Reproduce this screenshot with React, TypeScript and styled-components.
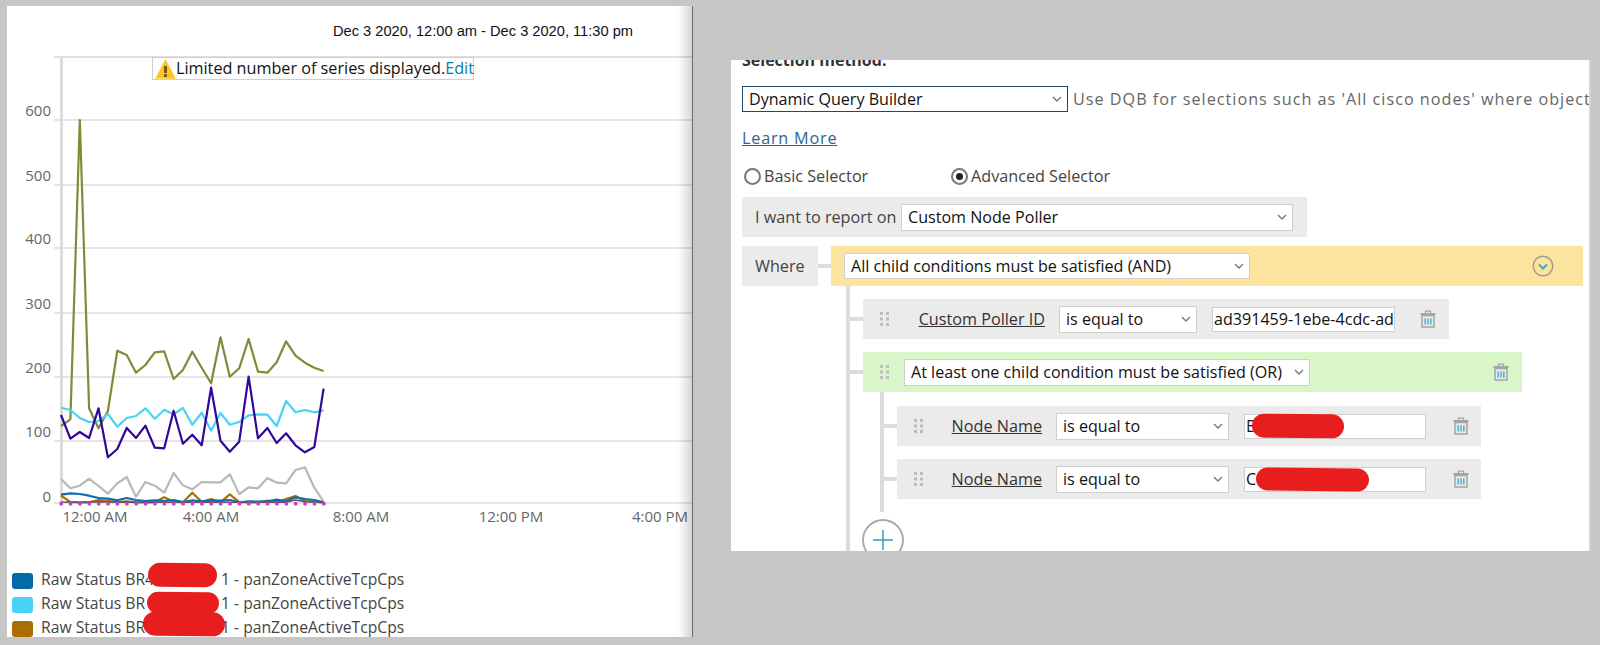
import React from "react";
import styled, { createGlobalStyle } from "styled-components";

const Global = createGlobalStyle`
  html, body { margin: 0; padding: 0; background: #c6c6c6; width: 1600px; height: 645px; overflow: hidden; }
  * { box-sizing: border-box; }
`;

const UI_FONT = `"Open Sans", "Noto Sans", sans-serif`;

const Page = styled.div`
  display: flex;
  align-items: flex-start;
  width: 1600px;
  height: 645px;
  overflow: hidden;
  background: #c6c6c6;
  font-family: ${UI_FONT};
`;

const ChartPanel = styled.section`
  position: relative;
  flex: none;
  width: 686px;
  height: 631px;
  margin: 6px 0 0 7px;
  background: #fff;
  overflow: hidden;
  border-right: 1px solid #6d6d6d;
  &::after {
    content: "";
    position: absolute;
    top: 0;
    right: 0;
    bottom: 0;
    width: 14px;
    background: linear-gradient(to right, rgba(0, 0, 0, 0), rgba(0, 0, 0, 0.16));
  }
`;

const DateRange = styled.header`
  height: 44px;
  padding: 16px 59px 0 0;
  text-align: right;
  font-family: "Liberation Sans", Arial, sans-serif;
  font-size: 14.65px;
  line-height: 18px;
  color: #111;
`;

const ChartArea = styled.div`
  position: relative;
  height: 519px;
`;

const ChartSvg = styled.svg`
  display: block;
  width: 685px;
  height: 519px;
`;

const AxisText = styled.text`
  font-family: ${UI_FONT};
  font-size: 15px;
  fill: #666;
`;

const WarningBadge = styled.div`
  position: absolute;
  left: 145px;
  top: 7px;
  width: 322px;
  height: 23px;
  display: flex;
  align-items: center;
  padding-left: 2px;
  background: #fff;
  border: 1px solid #cfcfcf;
  font-size: 16.2px;
  line-height: 20px;
  color: #111;
  white-space: nowrap;
`;

const BadgeText = styled.span`
  margin-top: -2px;
`;

const EditLink = styled.span`
  color: #0b7bab;
`;

const Legend = styled.div`
  display: flex;
  flex-direction: column;
  padding-left: 5px;
`;

const LegendRow = styled.div`
  position: relative;
  display: flex;
  align-items: center;
  height: 24px;
  font-size: 15.7px;
  color: #444;
  white-space: nowrap;
`;

const Swatch = styled.span<{ $color: string }>`
  flex: none;
  width: 21px;
  height: 16px;
  margin-right: 8px;
  border-radius: 3px;
  background: ${(p) => p.$color};
`;

const LegendName = styled.span`
  flex: none;
  width: 180px;
  margin-top: -4px;
  overflow: hidden;
`;

const LegendTail = styled.span`
  margin-top: -4px;
`;

const Scribble = styled.span<{ $left: number; $top: number; $width: number; $height: number }>`
  position: absolute;
  left: ${(p) => p.$left}px;
  top: ${(p) => p.$top}px;
  width: ${(p) => p.$width}px;
  height: ${(p) => p.$height}px;
  border-radius: 12px;
  background: #e81e1e;
  transform: rotate(0.6deg);
  z-index: 2;
`;

const BuilderPanel = styled.section`
  flex: none;
  width: 860px;
  height: 491px;
  margin: 60px 0 0 38px;
  padding-left: 11px;
  background: #fff;
  border-right: 2px solid #d4d4d4;
  overflow: hidden;
`;

const SectionTitle = styled.h3`
  margin: -10px 0 16px;
  font-size: 16px;
  line-height: 20px;
  font-weight: 700;
  color: #333;
`;

const MethodRow = styled.div`
  display: flex;
  align-items: center;
  gap: 5px;
  height: 26px;
  white-space: nowrap;
`;

const Hint = styled.span`
  font-size: 16.2px;
  letter-spacing: 1px;
  color: #666;
`;

const SelectBox = styled.div<{ $w: number; $h?: number; $accent?: boolean }>`
  flex: none;
  display: flex;
  align-items: center;
  justify-content: space-between;
  width: ${(p) => p.$w}px;
  height: ${(p) => p.$h ?? 27}px;
  padding: 0 5px 0 6px;
  background: #fff;
  border: 1px solid ${(p) => (p.$accent ? "#1f4a63" : "#cfcfcf")};
  font-size: 16.1px;
  color: #111;
  white-space: nowrap;
`;

const LearnMore = styled.a`
  display: block;
  width: fit-content;
  margin-top: 16px;
  font-size: 16.2px;
  letter-spacing: 0.8px;
  line-height: 20px;
  color: #2a6496;
  text-decoration: underline;
`;

const RadioRow = styled.div`
  display: flex;
  margin: 18px 0 11px 2px;
  height: 20px;
`;

const RadioOption = styled.label`
  display: flex;
  align-items: center;
  gap: 3px;
  width: 207px;
  font-size: 16.2px;
  color: #444;
`;

const RadioDot = styled.span<{ $on?: boolean }>`
  flex: none;
  display: flex;
  align-items: center;
  justify-content: center;
  width: 17px;
  height: 17px;
  border: 2px solid #777;
  border-radius: 50%;
  &::after {
    content: "";
    display: ${(p) => (p.$on ? "block" : "none")};
    width: 7px;
    height: 7px;
    border-radius: 50%;
    background: #222;
  }
`;

const ReportRow = styled.div`
  display: flex;
  align-items: center;
  width: 565px;
  height: 40px;
  margin-bottom: 9px;
  padding-left: 13px;
  background: #ebebeb;
`;

const ReportLabel = styled.span`
  flex: none;
  width: 146px;
  font-size: 16.2px;
  color: #444;
  white-space: nowrap;
`;

const WhereRow = styled.div`
  display: flex;
  align-items: center;
  height: 40px;
`;

const WhereLabel = styled.div`
  flex: none;
  display: flex;
  align-items: center;
  width: 76px;
  height: 40px;
  padding-left: 13px;
  background: #ebebeb;
  font-size: 16.2px;
  color: #444;
`;

const Stub = styled.span`
  flex: none;
  width: 13px;
  height: 4px;
  background: #dcdcdc;
`;

const RuleBar = styled.div<{ $w: number; $tint: string; $pad: number }>`
  flex: none;
  display: flex;
  align-items: center;
  justify-content: space-between;
  width: ${(p) => p.$w}px;
  height: 40px;
  padding-left: ${(p) => p.$pad}px;
  background: ${(p) => p.$tint};
`;

const BarLead = styled.div`
  display: flex;
  align-items: center;
`;

const Tree = styled.div`
  display: flex;
  flex-direction: column;
  margin-left: 104px;
  padding-top: 13px;
  border-left: 4px solid #dcdcdc;
`;

const Branch = styled.div`
  display: flex;
  align-items: center;
`;

const GroupBranch = styled(Branch)`
  margin-top: 13px;
`;

const NestedTree = styled.div`
  display: flex;
  flex-direction: column;
  gap: 13px;
  margin: 0 0 7px 30px;
  padding: 14px 0 13px;
  border-left: 4px solid #dcdcdc;
`;

const ConditionRow = styled.div<{ $w: number }>`
  flex: none;
  display: flex;
  align-items: center;
  width: ${(p) => p.$w}px;
  height: 40px;
  padding-left: 17px;
  background: #ebebeb;
`;

const FieldLabel = styled.span<{ $w: number }>`
  flex: none;
  width: ${(p) => p.$w}px;
  margin-right: 14px;
  text-align: right;
  font-size: 16.2px;
  color: #333;
  text-decoration: underline;
  white-space: nowrap;
`;

const ValueWrap = styled.div<{ $w: number }>`
  position: relative;
  flex: none;
  width: ${(p) => p.$w}px;
  height: 25px;
  margin-left: 15px;
`;

const ValueInput = styled.input`
  display: block;
  width: 100%;
  height: 100%;
  padding: 0 1px;
  border: 1px solid #cfcfcf;
  background: #fff;
  font-family: ${UI_FONT};
  font-size: 16.1px;
  color: #111;
  outline: none;
`;

const AddButton = styled.button`
  flex: none;
  display: flex;
  align-items: center;
  justify-content: center;
  width: 42px;
  height: 42px;
  margin-left: 12px;
  padding: 0;
  background: #fff;
  border: 2px solid #aaa;
  border-radius: 50%;
`;

const SmallIcon = styled.svg<{ $ml?: number; $mr?: number }>`
  flex: none;
  display: block;
  margin-left: ${(p) => p.$ml ?? 0}px;
  margin-right: ${(p) => p.$mr ?? 0}px;
`;

const Chevron = () => (
  <SmallIcon width="10" height="6" viewBox="0 0 10 6">
    <polyline points="1,1 5,5 9,1" fill="none" stroke="#777" strokeWidth="1.4" />
  </SmallIcon>
);

const Grip = ({ after }: { after?: number }) => (
  <SmallIcon $mr={after} width="9" height="14" viewBox="0 0 9 14">
    {[0, 5.5, 11].flatMap((y) =>
      [0, 6].map((x) => <rect key={`${x}-${y}`} x={x} y={y} width="3" height="3" fill="#bcbcbc" />)
    )}
  </SmallIcon>
);

const Trash = ({ left, right }: { left?: number; right?: number }) => (
  <SmallIcon $ml={left} $mr={right} width="16" height="18" viewBox="0 0 16 18">
    <path d="M5.5 3V1.2h5V3" fill="none" stroke="#a5a5a5" strokeWidth="1.3" />
    <rect x="0.5" y="3" width="15" height="2" fill="#a5a5a5" />
    <path d="M2 5.5h12V17H2z" fill="#e8e8e8" stroke="#a5a5a5" strokeWidth="1.5" />
    <path d="M5.2 8.5v6M8 8.5v6M10.8 8.5v6" stroke="#45b3d0" strokeWidth="1.5" />
  </SmallIcon>
);

const CollapseIcon = () => (
  <SmallIcon $mr={29} width="22" height="22" viewBox="0 0 22 22">
    <circle cx="11" cy="11" r="9.8" fill="none" stroke="#a09c88" strokeWidth="1.5" />
    <polyline points="7,9.5 11,13.5 15,9.5" fill="none" stroke="#35aec6" strokeWidth="2" />
  </SmallIcon>
);

const WarningIcon = () => (
  <SmallIcon width="21" height="20" viewBox="0 0 21 20">
    <path d="M10.5 0.5 L20.5 19.5 H0.5 Z" fill="#fdc51d" stroke="#fdd35a" strokeWidth="0.8" strokeLinejoin="round" />
    <rect x="9" y="7" width="3" height="7" fill="#7a5b12" />
    <rect x="9" y="15" width="3" height="3" fill="#7a5b12" />
  </SmallIcon>
);

const toY = (z: number) => 320 + z / 3;
const toX = (i: number) => 61 + i * 9.38;

const olive = [318, 298, -600, 265, 325, 273, 92, 105, 158, 135, 97, 94, 177, 150, 95, 143, 190, 52, 170, 145, 57, 155, 158, 127, 64, 107, 128, 143, 153];
const purple = [285, 356, 336, 354, 265, 412, 387, 324, 354, 317, 383, 385, 272, 371, 344, 376, 203, 362, 395, 365, 170, 355, 324, 369, 340, 376, 397, 381, 206];
const cyan = [263, 270, 294, 306, 303, 282, 320, 294, 288, 265, 296, 269, 283, 264, 314, 278, 332, 279, 314, 306, 286, 283, 284, 318, 243, 277, 270, 277, 271];
const gray = [477, 505, 497, 476, 498, 521, 490, 471, 530, 486, 497, 518, 459, 496, 508, 486, 487, 487, 463, 522, 502, 505, 474, 488, 490, 450, 442, 503, 545];
const blue = [524, 520, 522, 527, 534, 536, 541, 534, 540, 543, 541, 543, 540, 546, 541, 544, 542, 542, 540, 547, 544, 545, 544, 539, 544, 532, 537, 540, 547];
const brown = [527, 546, 547, 547, 540, 543, 546, 544, 547, 547, 547, 532, 545, 547, 518, 545, 537, 547, 523, 546, 547, 547, 542, 547, 537, 528, 543, 545, 547];
const slate = [546, 547, 547, 547, 545, 546, 547, 546, 547, 547, 547, 547, 547, 547, 547, 547, 546, 547, 547, 547, 547, 547, 547, 547, 547, 540, 545, 546, 548];

const series: { data: number[]; color: string; width: number }[] = [
  { data: olive, color: "#7f8c37", width: 2.2 },
  { data: gray, color: "#b8b8b8", width: 2.2 },
  { data: cyan, color: "#4ad2f5", width: 2.2 },
  { data: purple, color: "#33069a", width: 2.2 },
  { data: brown, color: "#a96f00", width: 2.2 },
  { data: blue, color: "#0b6fae", width: 2.2 },
  { data: slate, color: "#5a5a5a", width: 1.6 },
];

const gridTicks = [
  { y: 120, label: "600", lift: 4 },
  { y: 185, label: "500", lift: 4 },
  { y: 248, label: "400", lift: 4 },
  { y: 313, label: "300", lift: 4 },
  { y: 377, label: "200", lift: 4 },
  { y: 441, label: "100", lift: 4 },
  { y: 503, label: "0", lift: 1 },
];

const timeLabels = [
  { x: 95, label: "12:00 AM" },
  { x: 211, label: "4:00 AM" },
  { x: 361, label: "8:00 AM" },
  { x: 511, label: "12:00 PM" },
  { x: 660, label: "4:00 PM" },
];

const Chart = () => (
  <ChartSvg viewBox="7 50 685 519">
    <line x1="54" x2="692" y1="57" y2="57" stroke="#d4d4d4" strokeWidth="1.5" />
    {gridTicks.map((t) => (
      <g key={t.label}>
        <line x1="54" x2="692" y1={t.y} y2={t.y} stroke="#dcdcdc" strokeWidth="1.5" />
        <AxisText x="51" y={t.y - t.lift} textAnchor="end">
          {t.label}
        </AxisText>
      </g>
    ))}
    <rect x="60" y="57" width="3" height="446" fill="#dcdcdc" />
    {timeLabels.map((t) => (
      <AxisText key={t.label} x={t.x} y="522" textAnchor="middle">
        {t.label}
      </AxisText>
    ))}
    {series.map((s) => (
      <polyline
        key={s.color}
        points={s.data.map((z, i) => `${toX(i).toFixed(1)},${toY(z).toFixed(1)}`).join(" ")}
        fill="none"
        stroke={s.color}
        strokeWidth={s.width}
        strokeLinejoin="round"
      />
    ))}
    {olive.map((_, i) => (
      <rect key={i} x={toX(i) - 1.5} y="502" width="3.4" height="3.4" fill="#c83cc8" />
    ))}
  </ChartSvg>
);

const legendRows = [
  { color: "#0369a9", name: "Raw Status BR4", scribble: { $left: 136, $top: -6, $width: 69, $height: 24 } },
  { color: "#47d3f5", name: "Raw Status BR", scribble: { $left: 135, $top: -1, $width: 72, $height: 22 } },
  { color: "#a86e00", name: "Raw Status BR", scribble: { $left: 131, $top: -5, $width: 82, $height: 24 } },
];

const nodeRows = [
  { value: "B", scribble: { $left: 8, $top: 0, $width: 92, $height: 24 } },
  { value: "C", scribble: { $left: 12, $top: 1, $width: 113, $height: 23 } },
];

export default function App() {
  return (
    <Page>
      <Global />
      <ChartPanel>
        <DateRange>Dec 3 2020, 12:00 am - Dec 3 2020, 11:30 pm</DateRange>
        <ChartArea>
          <Chart />
          <WarningBadge>
            <WarningIcon />
            <BadgeText>
              Limited number of series displayed.<EditLink>Edit</EditLink>
            </BadgeText>
          </WarningBadge>
        </ChartArea>
        <Legend>
          {legendRows.map((row) => (
            <LegendRow key={row.color}>
              <Swatch $color={row.color} />
              <LegendName>{row.name}</LegendName>
              <LegendTail>1 - panZoneActiveTcpCps</LegendTail>
              <Scribble {...row.scribble} />
            </LegendRow>
          ))}
        </Legend>
      </ChartPanel>

      <BuilderPanel>
        <SectionTitle>Selection method:</SectionTitle>
        <MethodRow>
          <SelectBox $w={326} $h={26} $accent>
            Dynamic Query Builder
            <Chevron />
          </SelectBox>
          <Hint>Use DQB for selections such as 'All cisco nodes' where object</Hint>
        </MethodRow>
        <LearnMore>Learn More</LearnMore>
        <RadioRow>
          <RadioOption>
            <RadioDot />
            Basic Selector
          </RadioOption>
          <RadioOption>
            <RadioDot $on />
            Advanced Selector
          </RadioOption>
        </RadioRow>
        <ReportRow>
          <ReportLabel>I want to report on</ReportLabel>
          <SelectBox $w={392}>
            Custom Node Poller
            <Chevron />
          </SelectBox>
        </ReportRow>
        <WhereRow>
          <WhereLabel>Where</WhereLabel>
          <Stub />
          <RuleBar $w={752} $tint="#fde49e" $pad={13}>
            <SelectBox $w={406} $h={26}>
              All child conditions must be satisfied (AND)
              <Chevron />
            </SelectBox>
            <CollapseIcon />
          </RuleBar>
        </WhereRow>
        <Tree>
          <Branch>
            <Stub />
            <ConditionRow $w={586}>
              <Grip />
              <FieldLabel $w={156}>Custom Poller ID</FieldLabel>
              <SelectBox $w={138}>
                is equal to
                <Chevron />
              </SelectBox>
              <ValueWrap $w={183}>
                <ValueInput readOnly value="ad391459-1ebe-4cdc-ad44" />
              </ValueWrap>
              <Trash left={25} />
            </ConditionRow>
          </Branch>
          <GroupBranch>
            <Stub />
            <RuleBar $w={659} $tint="#d9f6c9" $pad={17}>
              <BarLead>
                <Grip after={15} />
                <SelectBox $w={406}>
                  At least one child condition must be satisfied (OR)
                  <Chevron />
                </SelectBox>
              </BarLead>
              <Trash right={13} />
            </RuleBar>
          </GroupBranch>
          <NestedTree>
            {nodeRows.map((row) => (
              <Branch key={row.value}>
                <Stub />
                <ConditionRow $w={584}>
                  <Grip />
                  <FieldLabel $w={119}>Node Name</FieldLabel>
                  <SelectBox $w={173}>
                    is equal to
                    <Chevron />
                  </SelectBox>
                  <ValueWrap $w={182}>
                    <ValueInput readOnly value={row.value} />
                    <Scribble {...row.scribble} />
                  </ValueWrap>
                  <Trash left={27} />
                </ConditionRow>
              </Branch>
            ))}
          </NestedTree>
          <AddButton aria-label="Add">
            <SmallIcon width="20" height="20" viewBox="0 0 20 20">
              <path d="M0 10h20M10 0v20" stroke="#3a9bc0" strokeWidth="1.5" />
            </SmallIcon>
          </AddButton>
        </Tree>
      </BuilderPanel>
    </Page>
  );
}
